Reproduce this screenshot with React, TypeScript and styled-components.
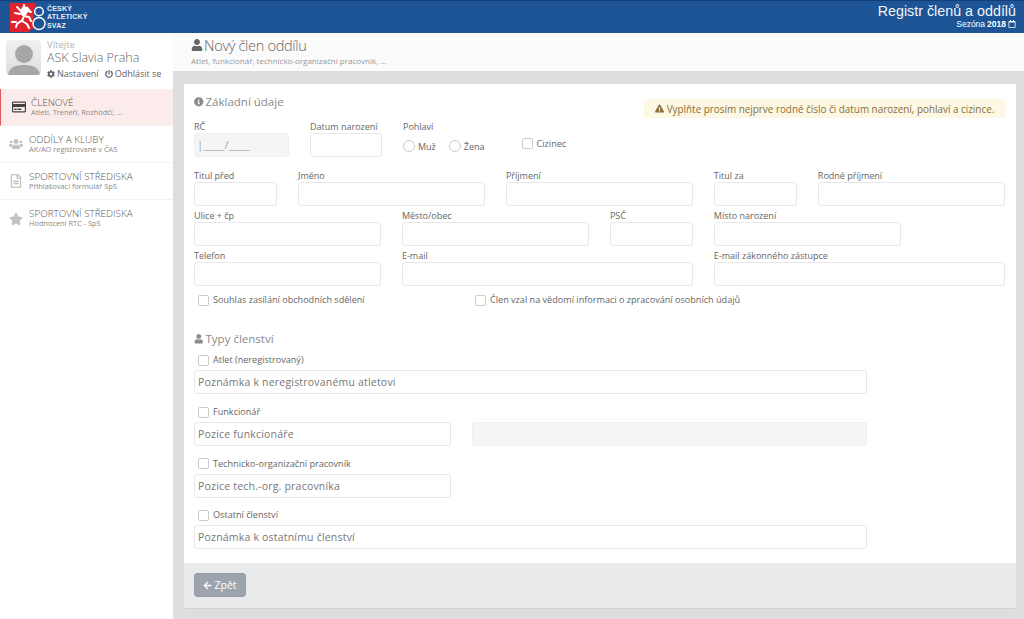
import React from "react";
import styled, { createGlobalStyle } from "styled-components";
import { FaUser, FaInfoCircle, FaCog, FaPowerOff, FaRegCreditCard, FaUsers, FaRegFileAlt, FaStar, FaExclamationTriangle, FaArrowLeft, FaRegCalendar } from "react-icons/fa";

const Global = createGlobalStyle`
  html, body { margin: 0; padding: 0; height: 100%; overflow: hidden; background: #dedede; }
  #root { height: 619px; }
  * { box-sizing: border-box; }
  body { font-family: "Open Sans", "Liberation Sans", sans-serif; color: #6b6b6b; }
`;

const Page = styled.div`display: flex; flex-direction: column; width: 1024px; height: 619px;`;
const Header = styled.header`
  height: 33px; flex: none; display: flex; align-items: stretch; justify-content: space-between;
  background: #1c5496; border-top: 1px solid #123f78; padding: 0 8px 0 10px; color: #fff;
`;
const Logo = styled.div`display: flex; align-items: center; gap: 1px; height: 32px;`;
const LogoText = styled.div`
  font-family: "Liberation Sans", sans-serif; font-weight: 700; font-size: 7px; line-height: 8.5px; letter-spacing: .2px; color: #e8eef6; margin-top: 1px;
`;
const Brand = styled.div`
  text-align: right; display: flex; flex-direction: column; align-items: flex-end; padding-top: 3px; font-family: "Liberation Sans", sans-serif;
`;
const BrandTitle = styled.div`font-size: 14.3px; line-height: 15px; color: #f0f4fa;`;
const Season = styled.div`font-size: 8.5px; line-height: 10px; display: flex; align-items: center; gap: 2px; b { font-weight: 700; } svg { font-size: 8px; }`;
const Body = styled.div`flex: 1; display: flex; min-height: 0;`;
const Side = styled.aside`width: 173px; flex: none; background: #fff; display: flex; flex-direction: column;`;
const Profile = styled.div`height: 56px; flex: none; display: flex; gap: 6px; padding: 7px 0 0 6px;`;
const Avatar = styled.div`
  width: 35px; height: 35px; border-radius: 4px; background: linear-gradient(#f0f0f0, #dedede); overflow: hidden; flex: none; display: block;
`;
const ProfileText = styled.div`display: flex; flex-direction: column;`;
const Welcome = styled.div`font-size: 9.5px; line-height: 10px; color: #b4b4b4;`;
const ProfileName = styled.div`font-size: 12.5px; font-weight: 300; line-height: 16px; color: #666;`;
const ProfileLinks = styled.div`display: flex; gap: 6px; font-size: 9px; line-height: 12px; margin-top: 2px; color: #666; white-space: nowrap;
  span { display: inline-flex; align-items: center; gap: 2px; } svg { font-size: 8px; }`;
const NavItem = styled.div<{ $active?: boolean }>`
  height: 37px; flex: none; display: flex; align-items: center; gap: ${p => (p.$active ? "5px" : "6px")}; border-bottom: 1px solid #f2f2f2;
  padding-left: ${p => (p.$active ? "10px" : "8px")};
  background: ${p => (p.$active ? "#fbeceb" : "#fff")};
  border-left: ${p => (p.$active ? "1px solid #e05a5a" : "none")};
  color: ${p => (p.$active ? "#444" : "#c2c2c2")};
  &:last-child { border-bottom: none; }
`;
const NavIcon = styled.div`width: 15px; display: flex; justify-content: center; font-size: 14px; flex: none;`;
const NavText = styled.div`display: flex; flex-direction: column; padding-bottom: 2px;`;
const NavTitle = styled.div`font-size: 9.9px; font-weight: 300; line-height: 12px; color: #555; white-space: nowrap;`;
const NavSub = styled.div`font-size: 7.4px; line-height: 9px; color: #8a8a8a; white-space: nowrap;`;
const Main = styled.main`flex: 1; min-width: 0; display: flex; flex-direction: column; background: #dedede;`;
const TitleBar = styled.div`height: 38px; flex: none; background: #fbfbfb; padding: 2px 0 0 18px;`;
const PageTitle = styled.h1`margin: 0; font-weight: 300; font-size: 14.6px; line-height: 20px; color: #666; display: flex; align-items: center; gap: 1px; letter-spacing: -0.35px; svg { font-size: 12px; }`;
const PageSub = styled.div`font-size: 8px; line-height: 10px; color: #999; margin-top: 1px;`;
const Panel = styled.section`
  margin: 13px 8px 0 11px; height: 524px; flex: none; background: #fff; border-radius: 2px; display: flex; flex-direction: column; box-shadow: 0 1px 1px rgba(0,0,0,.06);
`;
const PanelBody = styled.div`flex: 1; padding: 10px 11px 0 10px; display: flex; flex-direction: column;`;
const SectionTitle = styled.h2`margin: 0; font-weight: 400; font-size: 11.5px; line-height: 16px; color: #8b8b8b; display: flex; align-items: center; gap: 2px; svg { font-size: 9.5px; }`;
const TopRow = styled.div`display: flex; justify-content: space-between; align-items: flex-start; height: 20px;`;
const Notice = styled.div`
  width: 361px; height: 19px; margin-top: 5px; background: #fcf8e3; border-radius: 3px; color: #8a6d3b; font-size: 9.9px; display: flex; align-items: center; justify-content: center; gap: 3px; white-space: nowrap;
  svg { font-size: 9px; }
`;
const FirstRow = styled.div`display: flex; height: 37px; margin-top: 7px;`;
const Field = styled.div<{ $w?: number; $ml?: number; $span?: number }>`
  display: flex; flex-direction: column;
  ${p => (p.$w ? `width: ${p.$w}px; flex: none;` : "")}
  ${p => (p.$ml ? `margin-left: ${p.$ml}px;` : "")}
  ${p => (p.$span ? `grid-column: span ${p.$span};` : "")}
`;
const Label = styled.label`font-size: 9px; line-height: 12px; height: 12px; color: #666; white-space: nowrap;`;
const Input = styled.div<{ $dis?: boolean; $w?: number }>`
  height: 24px; border: 1px solid ${p => (p.$dis ? "#f0f0f0" : "#e8e8e8")}; border-radius: 3px; background: ${p => (p.$dis ? "#f5f5f5" : "#fff")};
  font-size: 10.5px; line-height: 22px; color: #777; padding-left: 3px; letter-spacing: .2px; white-space: nowrap;
  ${p => (p.$w ? `width: ${p.$w}px;` : "")}
`;
const Mask = styled.span`font-size: 11.5px; color: #777; letter-spacing: .5px; font-weight: 300; margin-left: -1px;`;
const Radios = styled.div`display: flex; gap: 13px; height: 24px; padding-top: 2px; align-items: center; font-size: 9px; color: #666;`;
const Radio = styled.span`display: inline-flex; gap: 3px; align-items: center; i { width: 12px; height: 12px; border-radius: 50%; border: 1px solid #ccc; display: block; }`;
const Check = styled.span`display: inline-flex; gap: 4px; align-items: center; font-size: 9.1px; line-height: 12px; color: #666; white-space: nowrap; i { width: 11px; height: 11px; border-radius: 2px; border: 1px solid #ccc; display: block; background: #fff; }`;
const CizinecWrap = styled.div`margin-left: 37px; padding-top: 11px;`;
const Grid = styled.div<{ $mt: number }>`display: grid; grid-template-columns: repeat(8, 1fr); column-gap: 20.8px; margin-top: ${p => p.$mt}px;`;
const Consent = styled.div`display: grid; grid-template-columns: 277px auto; margin: 7px 0 0 4px; height: 14px;`;
const Types = styled.div`margin-top: 24px;`;
const TypeRow = styled.div`margin-top: 10.67px; h2 + & { margin-top: 6.4px; }`;
const TypeInputs = styled.div`display: flex; gap: 21px; margin-top: 3px;`;
const TypeCheck = styled.div`padding-left: 4px; height: 14px; display: flex; align-items: center;`;
const Footer = styled.div`height: 45px; flex: none; background: #e9eaeb; padding: 10px 10px; border-radius: 0 0 2px 2px;`;
const Back = styled.button`
  width: 52px; height: 24px; background: #9ea4ad; border: 1px solid #979da6; border-radius: 3px; color: #fff; font: 400 10.5px "Open Sans", sans-serif; display: flex; align-items: center; justify-content: center; gap: 2px; padding: 0;
  svg { font-size: 9px; }
`;

const nav = [
  { icon: <FaRegCreditCard />, title: "ČLENOVÉ", sub: "Atleti, Trenéři, Rozhodčí, ...", active: true },
  { icon: <FaUsers />, title: "ODDÍLY A KLUBY", sub: "AK/AO registrované v ČAS" },
  { icon: <FaRegFileAlt />, title: "SPORTOVNÍ STŘEDISKA", sub: "Přihlašovací formulář SpS" },
  { icon: <FaStar />, title: "SPORTOVNÍ STŘEDISKA", sub: "Hodnocení RTC - SpS" },
];

export default function App() {
  return (
    <Page>
      <Global />
      <Header>
        <Logo>
          <svg width="36" height="29" viewBox="0 0 36 29">
            <path d="M0 0h26v5h-2v20l-6 4H0z" fill="#e0232c" />
            <g fill="none" stroke="#fff" strokeWidth="2" strokeLinecap="round" strokeLinejoin="round">
              <path d="M10 7l4 6-2 5M14 5l4 3 3 1M14 13l5 1 2 4M12 18l5 3 2 4M11 18l-4 3-1 3M14 2v3M7 4l3 3M5 10l5 1M2 19h4" />
            </g>
            <path d="M13 3l5 1 3 4-3 1-2 3-4 1-2-5z" fill="#fff" />
            <circle cx="29" cy="8.5" r="4.3" fill="#1c5496" stroke="#fff" strokeWidth="1.5" />
            <circle cx="29" cy="20.5" r="6" fill="#1c5496" stroke="#fff" strokeWidth="1.5" />
          </svg>
          <LogoText>ČESKÝ<br />ATLETICKÝ<br />SVAZ</LogoText>
        </Logo>
        <Brand>
          <BrandTitle>Registr členů a oddílů</BrandTitle>
          <Season>Sezóna <b>2018</b> <FaRegCalendar /></Season>
        </Brand>
      </Header>
      <Body>
        <Side>
          <Profile>
            <Avatar>
              <svg width="35" height="35" viewBox="0 0 35 35">
                <circle cx="18" cy="14" r="9" fill="#a6a6a6" />
                <path d="M2 35c1-8 8-10 16-10s15 2 16 10z" fill="#a6a6a6" />
              </svg>
            </Avatar>
            <ProfileText>
              <Welcome>Vítejte</Welcome>
              <ProfileName>ASK Slavia Praha</ProfileName>
              <ProfileLinks>
                <span><FaCog />Nastavení</span>
                <span><FaPowerOff />Odhlásit se</span>
              </ProfileLinks>
            </ProfileText>
          </Profile>
          {nav.map((n, i) => (
            <NavItem key={i} $active={n.active}>
              <NavIcon>{n.icon}</NavIcon>
              <NavText>
                <NavTitle>{n.title}</NavTitle>
                <NavSub>{n.sub}</NavSub>
              </NavText>
            </NavItem>
          ))}
        </Side>
        <Main>
          <TitleBar>
            <PageTitle><FaUser />Nový člen oddílu</PageTitle>
            <PageSub>Atlet, funkcionář, technicko-organizační pracovník, ...</PageSub>
          </TitleBar>
          <Panel>
            <PanelBody>
              <TopRow>
                <SectionTitle><FaInfoCircle />Základní údaje</SectionTitle>
                <Notice><FaExclamationTriangle /><span>Vyplňte prosím nejprve rodné číslo či datum narození, pohlaví a cizince.</span></Notice>
              </TopRow>
              <FirstRow>
                <Field $w={95}>
                  <Label>RČ</Label>
                  <Input $dis><Mask>|____/____</Mask></Input>
                </Field>
                <Field $w={72} $ml={21}>
                  <Label>Datum narození</Label>
                  <Input />
                </Field>
                <Field $ml={21}>
                  <Label>Pohlaví</Label>
                  <Radios>
                    <Radio><i />Muž</Radio>
                    <Radio><i />Žena</Radio>
                  </Radios>
                </Field>
                <CizinecWrap><Check><i />Cizinec</Check></CizinecWrap>
              </FirstRow>
              <Grid $mt={12}>
                <Field><Label>Titul před</Label><Input /></Field>
                <Field $span={2}><Label>Jméno</Label><Input /></Field>
                <Field $span={2}><Label>Příjmení</Label><Input /></Field>
                <Field><Label>Titul za</Label><Input /></Field>
                <Field $span={2}><Label>Rodné příjmení</Label><Input /></Field>
              </Grid>
              <Grid $mt={4}>
                <Field $span={2}><Label>Ulice + čp</Label><Input /></Field>
                <Field $span={2}><Label>Město/obec</Label><Input /></Field>
                <Field><Label>PSČ</Label><Input /></Field>
                <Field $span={2}><Label>Místo narození</Label><Input /></Field>
              </Grid>
              <Grid $mt={4}>
                <Field $span={2}><Label>Telefon</Label><Input /></Field>
                <Field $span={3}><Label>E-mail</Label><Input /></Field>
                <Field $span={3}><Label>E-mail zákonného zástupce</Label><Input /></Field>
              </Grid>
              <Consent>
                <Check><i />Souhlas zasílání obchodních sdělení</Check>
                <Check><i />Člen vzal na vědomí informaci o zpracování osobních údajů</Check>
              </Consent>
              <Types>
                <SectionTitle><FaUser />Typy členství</SectionTitle>
                <TypeRow>
                  <TypeCheck><Check><i />Atlet (neregistrovaný)</Check></TypeCheck>
                  <TypeInputs><Input $w={673}>Poznámka k neregistrovanému atletovi</Input></TypeInputs>
                </TypeRow>
                <TypeRow>
                  <TypeCheck><Check><i />Funkcionář</Check></TypeCheck>
                  <TypeInputs><Input $w={257}>Pozice funkcionáře</Input><Input $w={395} $dis /></TypeInputs>
                </TypeRow>
                <TypeRow>
                  <TypeCheck><Check><i />Technicko-organizační pracovník</Check></TypeCheck>
                  <TypeInputs><Input $w={257}>Pozice tech.-org. pracovníka</Input></TypeInputs>
                </TypeRow>
                <TypeRow>
                  <TypeCheck><Check><i />Ostatní členství</Check></TypeCheck>
                  <TypeInputs><Input $w={673}>Poznámka k ostatnímu členství</Input></TypeInputs>
                </TypeRow>
              </Types>
            </PanelBody>
            <Footer><Back><FaArrowLeft />Zpět</Back></Footer>
          </Panel>
        </Main>
      </Body>
    </Page>
  );
}
